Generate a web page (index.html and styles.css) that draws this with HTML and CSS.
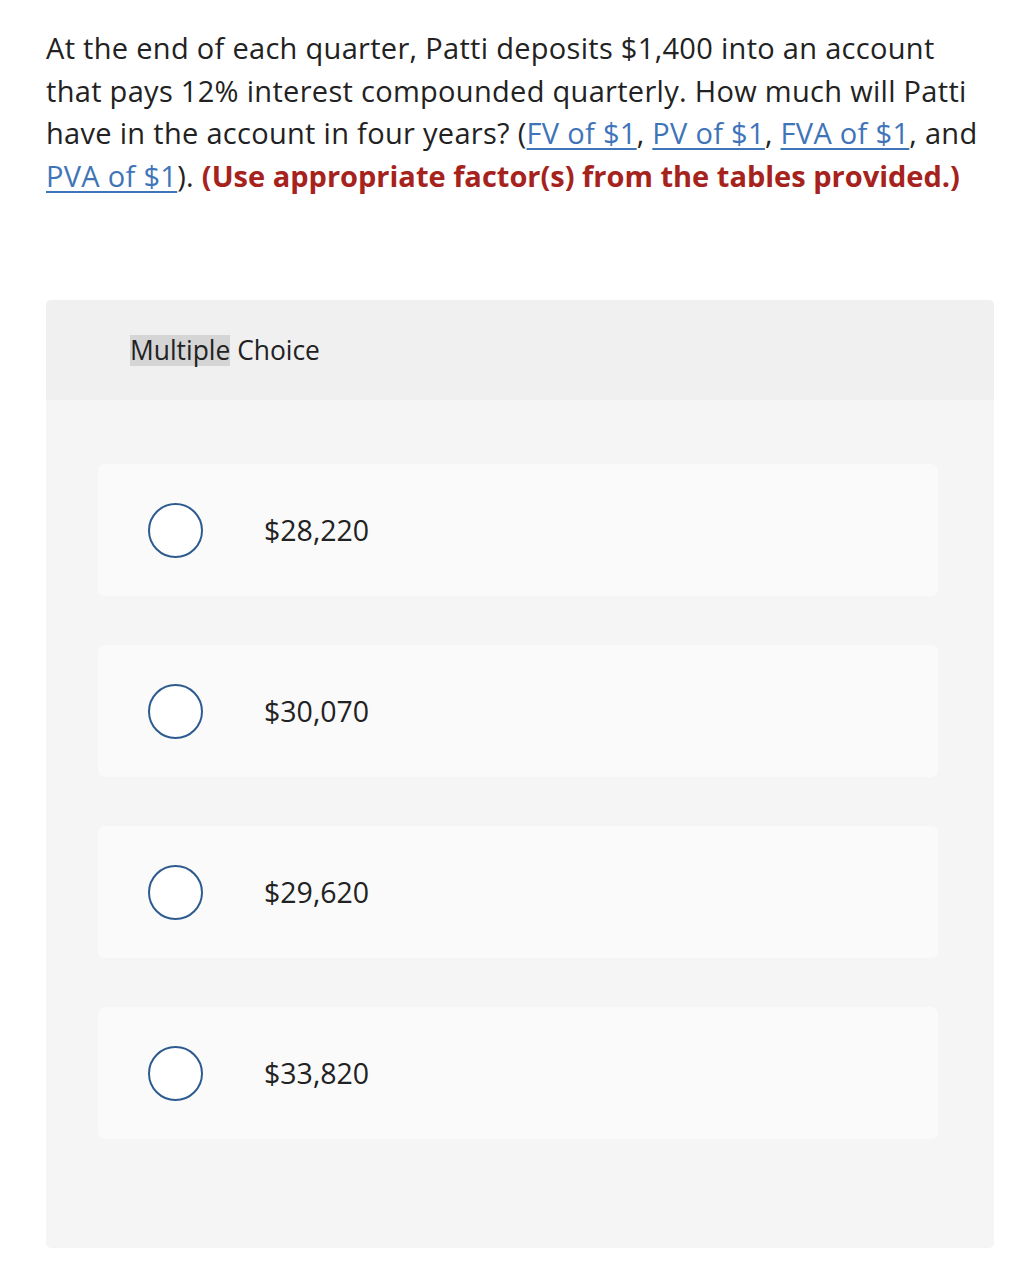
FILE: index.html
```html
<!DOCTYPE html>
<html>
<head>
<meta charset="utf-8">
<link rel="stylesheet" href="styles.css">
</head>
<body>
<div class="page">
  <p class="question">At the end of each quarter, Patti deposits $1,400 into an account<br>that pays 12% interest compounded quarterly. How much will Patti<br>have in the account in four years? (<a class="link" href="#">FV of $1</a>, <a class="link" href="#">PV of $1</a>, <a class="link" href="#">FVA of $1</a>, and<br><a class="link" href="#">PVA of $1</a>). <strong class="note">(Use appropriate factor(s) from the tables provided.)</strong></p>

  <div class="panel">
    <div class="panel-head"><span class="hl">Multiple</span> Choice</div>
    <div class="panel-body">
      <div class="option"><span class="radio"></span><span class="label">$28,220</span></div>
      <div class="option"><span class="radio"></span><span class="label">$30,070</span></div>
      <div class="option"><span class="radio"></span><span class="label">$29,620</span></div>
      <div class="option"><span class="radio"></span><span class="label">$33,820</span></div>
    </div>
  </div>
</div>
</body>
</html>
```
FILE: styles.css
```css
html, body {
  margin: 0;
  padding: 0;
  background: #ffffff;
}
body {
  font-family: "Open Sans", "Noto Sans", sans-serif;
  color: #222222;
}
.page {
  padding: 27px 20px 0 46px;
}
.question {
  margin: 0;
  font-size: 29px;
  line-height: 42.6px;
  letter-spacing: 0.3px;
  white-space: nowrap;
}
.link {
  color: #3f75b8;
  text-decoration: underline;
  text-decoration-thickness: 2px;
  text-underline-offset: 4px;
}
.note {
  color: #a6231d;
  font-weight: 700;
  letter-spacing: 0;
}
.panel {
  margin-top: 103px;
  width: 948px;
  background: #f5f5f5;
  border-radius: 5px;
  overflow: hidden;
}
.panel-head {
  background: #f0f0f0;
  height: 100px;
  display: flex;
  align-items: center;
  padding-left: 84px;
  font-size: 26.4px;
  white-space: pre;
}
.hl {
  display: inline-block;
  background: #d5d5d5;
  line-height: 31px;
}
.panel-body {
  padding: 64px 56px 109px 52px;
  display: flex;
  flex-direction: column;
  gap: 49px;
}
.option {
  height: 132px;
  background: #fafafa;
  border-radius: 7px;
  display: flex;
  align-items: center;
  padding-left: 50px;
}
.radio {
  width: 51px;
  height: 51px;
  border: 2px solid #2d5b8f;
  border-radius: 50%;
  background: #ffffff;
  flex: none;
}
.label {
  margin-left: 61px;
  font-size: 28.5px;
}
```
